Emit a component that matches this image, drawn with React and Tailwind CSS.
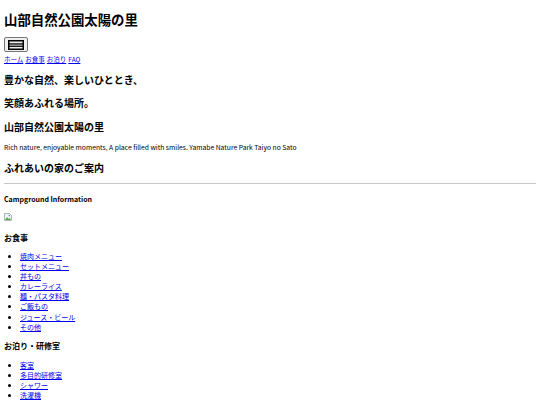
const foodMenu = [
  "焼肉メニュー",
  "セットメニュー",
  "丼もの",
  "カレーライス",
  "麺・パスタ料理",
  "ご飯もの",
  "ジュース・ビール",
  "その他",
];

const stayMenu = ["客室", "多目的研修室", "シャワー", "洗濯機"];

function MenuButton() {
  return (
    <button className="mt-[8px] flex h-[15px] w-[24px] items-center justify-center rounded-[2px] border border-[#767676] bg-[#efefef]">
      <svg width="16" height="10" viewBox="0 0 16 10">
        <rect x="0.75" y="0.75" width="14.5" height="8.5" fill="none" stroke="#000" strokeWidth="1.5" />
        <rect x="1" y="3.3" width="14" height="1.3" fill="#000" />
        <rect x="1" y="5.6" width="14" height="1.3" fill="#000" />
      </svg>
    </button>
  );
}

function BrokenImage() {
  return (
    <svg className="mt-[8px] block" width="8" height="8" viewBox="0 0 8 8">
      <path d="M0.5 0.5h5l2 2v5h-7z" fill="#f4f4f4" stroke="#a0a0a0" strokeWidth="0.8" />
      <path d="M1 7l2-3 1.5 2 1-1.2L7 7z" fill="#4caf50" />
      <circle cx="5.3" cy="2.6" r="0.8" fill="#4a90d9" />
    </svg>
  );
}

function LinkList({ items, className }) {
  return (
    <ul className={`list-disc pl-[16px] ${className}`}>
      {items.map((item) => (
        <li key={item} className="text-[7px] leading-[10.1px]">
          <a href="#" className="text-[#0000ee] underline">
            {item}
          </a>
        </li>
      ))}
    </ul>
  );
}

export default function App() {
  return (
    <div className="min-h-[405px] bg-white px-[4px] font-['Noto_Sans_CJK_JP',sans-serif] text-black">
      <h1 className="pt-[9px] text-[13.4px] font-bold leading-[20px]">山部自然公園太陽の里</h1>
      <MenuButton />
      <nav className="mt-[2px] flex gap-[2px] text-[6.5px] leading-[10px]">
        <a href="#" className="text-[#0000ee] underline">ホーム</a>
        <a href="#" className="text-[#0000ee] underline">お食事</a>
        <a href="#" className="text-[#0000ee] underline">お泊り</a>
        <a href="#" className="text-[#0000ee] underline">FAQ</a>
      </nav>
      <h2 className="mt-[8px] text-[10px] font-bold leading-[16px]">豊かな自然、楽しいひととき、</h2>
      <h2 className="mt-[7px] text-[10px] font-bold leading-[16px]">笑顔あふれる場所。</h2>
      <h2 className="mt-[8px] text-[10px] font-bold leading-[16px]">山部自然公園太陽の里</h2>
      <p className="mt-[6px] text-[6.75px] leading-[12px]">
        Rich nature, enjoyable moments, A place filled with smiles. Yamabe Nature Park Taiyo no Sato
      </p>
      <h2 className="mt-[7px] text-[10px] font-bold leading-[16px]">ふれあいの家のご案内</h2>
      <hr className="mt-[7px] border-t border-[#c6c6c6]" />
      <h4 className="mt-[9px] text-[7px] font-bold leading-[12px]">Campground Information</h4>
      <BrokenImage />
      <h3 className="mt-[11px] text-[8px] font-bold leading-[12px]">お食事</h3>
      <LinkList items={foodMenu} className="mt-[7px]" />
      <h3 className="mt-[8px] text-[8px] font-bold leading-[12px]">お泊り・研修室</h3>
      <LinkList items={stayMenu} className="mt-[8px]" />
    </div>
  );
}
